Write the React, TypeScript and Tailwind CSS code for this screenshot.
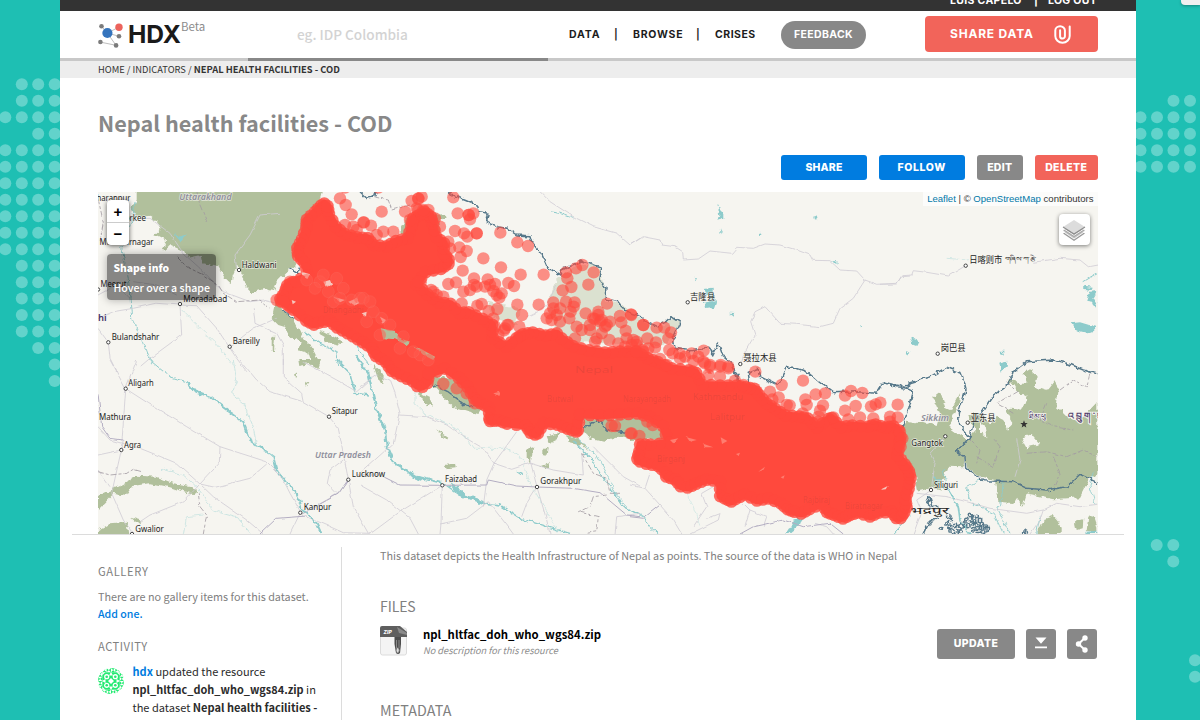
import React from 'react';

type Pt = [number, number];

/** Parses "x,y x,y" pairs drawn on a 3x grid whose corner sits at (ox, oy). */
const grid = (ox: number, oy: number, s: string): Pt[] =>
  s.trim().split(/\s+/).map((p) => {
    const [x, y] = p.split(',').map(Number);
    return [ox + x / 3, oy + y / 3];
  });
const line = (pts: Pt[]) => 'M' + pts.map((p) => `${p[0].toFixed(1)} ${p[1].toFixed(1)}`).join('L');
/** Moves every vertex of a closed counter-clockwise ring inwards by d. */
const inset = (ring: Pt[], d: number): Pt[] =>
  ring.map((p, i) => {
    const a = ring[(i + ring.length - 1) % ring.length];
    const b = ring[(i + 1) % ring.length];
    const dx = b[0] - a[0];
    const dy = b[1] - a[1];
    const len = Math.hypot(dx, dy) || 1;
    return [p[0] + (dy / len) * d, p[1] - (dx / len) * d];
  });
const A = (s: string) => grid(90, 185, s);
const B = (s: string) => grid(360, 185, s);
const C = (s: string) => grid(630, 185, s);
const D = (s: string) => grid(880, 185, s);
const E = (s: string) => grid(90, 360, s);
const F = (s: string) => grid(360, 360, s);
const G = (s: string) => grid(630, 360, s);
const H = (s: string) => grid(880, 360, s);

const forests: Pt[][] = [
  A('140,15 140,45 125,70 135,98 180,92 200,110 215,130 192,150 228,168 218,197 240,180 262,190 290,203 300,220 335,212 340,235 385,245 402,275 425,298 428,270 442,240 458,270 470,308 485,325 520,312 552,318 562,290 590,260 615,240 610,190 650,100 660,70 690,50 700,15'),
  A('556,350 585,380 610,400 625,430 640,460 665,485 685,525 665,535 655,505 625,495 632,470 600,455 582,425 565,420 545,400'),
  A('545,465 556,450 552,495 545,495'),
  A('690,435 760,470 750,480 705,470'),
  B('125,130 145,90 175,95 215,90 255,88 260,98 235,105 240,140 200,160 130,150'),
  B('60,430 110,440 150,470 185,490 235,515 245,540 180,540 100,470 70,465'),
  F('40,15 60,30 72,52 66,75 52,50'),
  F('150,0 240,50 300,62 345,100 385,128 372,140 355,162 320,152 280,140 255,118 230,90 200,60'),
  F('175,98 215,118 215,140 192,125'),
  F('668,172 840,174 840,240 770,230 730,245 690,235 668,205'),
  G('0,176 35,174 65,185 95,215 100,240 50,238 0,240'),
  F('560,232 600,216 592,240 568,252'),
  F('622,225 650,235 688,272 665,255 625,245'),
  F('500,268 520,262 512,310 500,290'),
  F('550,270 564,262 560,284 550,282'),
  F('540,320 570,308 562,322'),
  F('255,315 285,310 287,325 260,328'),
  F('228,208 262,230 258,236 240,222'),
  E('24,408 100,372 140,347 200,350 250,370 300,378 325,398 310,405 240,382 180,370 130,378 110,408 70,402 24,450'),
  E('24,510 60,490 110,485 115,525 24,525'),
  E('120,470 160,483 148,495'),
  E('625,0 690,0 682,25 660,12 628,18'),
  E('615,40 625,42 618,55'),
  E('645,65 658,70 650,80'),
  H('60,205 82,185 105,190 130,185 170,198 180,160 160,110 180,95 195,140 215,150 240,100 238,130 220,165 205,200 240,225 265,240 230,275 255,290 250,322 205,320 195,350 175,375 188,395 150,385 110,395 105,340 80,300 65,270'),
  H('270,232 290,210 272,190 262,165 300,160 335,195 350,170 370,180 380,210 400,190 378,150 395,143 425,152 440,110 412,92 385,55 420,72 440,70 430,40 455,25 470,50 462,80 500,92 525,60 535,95 530,140 560,170 600,180 652,125 652,345 628,355 600,412 520,418 440,400 428,440 410,415 400,432 370,430 352,418 345,360 300,350 262,325 255,290 230,275'),
  H('490,478 520,468 545,500 545,522 470,522'),
  H('585,485 610,478 608,505 590,510'),
  H('625,470 640,465 652,500 652,515 620,512'),
];

const paleForests: Pt[][] = [
  B('590,285 620,260 660,240 700,240 722,255 738,310 735,350 780,355 840,400 840,480 640,470 590,440 560,350'),
  C('0,390 60,420 100,425 110,405 135,400 148,412 130,455 100,480 0,480'),
  B('380,350 480,370 470,420 400,400'),
];

const clearings: Pt[][] = [
  H('300,190 318,205 322,235 300,215'),
  H('425,235 455,222 480,252 440,262'),
  H('530,140 545,95 600,70 640,90 648,128 600,178 560,160'),
  A('430,285 445,265 462,290 458,318 435,310'),
  A('185,112 210,128 195,146 178,135'),
];

const lakes: Pt[][] = [
  C('262,55 270,75 280,85 280,105 262,110 268,90'),
  C('272,130 278,140 275,148'),
  C('550,95 560,90 563,102 552,104'),
  C('390,140 398,145 395,153 388,152'),
  C('605,224 620,232 618,237'),
  C('220,312 248,308 248,322 258,350 252,368 225,372 222,355 245,345 225,325'),
  C('192,275 200,278 196,286'),
  C('300,383 316,384 312,392'),
  C('694,418 700,425 696,432'),
  C('824,496 838,500 834,506'),
  D('574,415 600,412 645,425 646,440 625,445 585,435'),
  D('90,460 118,468 112,480 98,475'),
  D('75,496 88,500 82,506'),
  D('612,305 635,308 632,315 614,312'),
  D('630,320 652,318 640,340 652,352 645,372 636,350 622,348'),
  D('358,500 374,500 368,512'),
  H('358,8 382,2 380,22 365,38'),
  G('492,482 525,470 508,495 478,522 466,522'),
  F('468,335 485,338 486,348'),
  F('268,370 290,378 320,405 380,425 378,432 310,412 285,395'),
  F('140,335 190,355 182,362 160,355'),
  A('250,145 268,155 290,148 272,172'),
  H('620,515 652,512 652,522 618,522'),
];

const rivers: [Pt[], number][] = [
  [E('185,5 240,50 290,65 315,95 360,110 420,155'), 1],
  [E('290,65 315,95 360,110 420,155 460,185 480,240 550,290 560,330 590,370 620,400 635,445 680,490 695,522'), 1.9],
  [E('430,0 440,60 425,100 460,130 490,200 500,260 550,290'), 0.7],
  [A('270,370 320,420 380,480 425,535'), 0.6],
  [A('135,50 128,100 95,190 115,280 120,340 125,400 160,470 185,535'), 0.9],
  [A('640,440 690,475 740,500 745,540'), 1.3],
  [A('800,480 815,510 840,540'), 1],
  [E('740,0 780,40 795,100 840,105'), 1.6],
  [F('-15,-15 25,40 50,150 75,210 80,260 100,305 170,350 250,370'), 2.2],
  [F('250,370 300,405 370,430 420,435 480,475 560,500 630,520'), 1.4],
  [F('165,85 165,130 200,165 300,210 340,265 440,265 490,300 510,370 540,420 580,490 600,518'), 0.6],
  [F('640,240 690,290 720,340 750,380 790,440 840,465'), 1.3],
  [F('655,240 710,285 740,340 765,395 800,440'), 0.8],
  [E('210,325 280,345 330,390 370,450 440,470 480,518'), 0.7],
  [E('280,522 290,470 340,465'), 0.6],
  [G('0,450 40,470 60,500 85,522'), 1],
  [G('170,400 190,440 210,500'), 0.5],
  [G('838,470 815,495 790,522'), 1],
  [H('160,350 205,390 235,440 240,480 270,520'), 1.6],
  [H('190,330 200,390'), 0.8],
  [H('370,360 362,440 350,440 380,500 390,520'), 0.9],
  [H('300,360 260,380 275,430 340,460 370,520'), 0.9],
  [H('640,335 630,380 645,430'), 0.8],
  [H('480,470 470,520'), 0.9],
  [D('200,220 262,225'), 0.6],
  [D('608,290 652,264'), 1],
  [B('570,80 600,85 640,100'), 1.1],
];

const roads: Pt[][] = [
  A('24,400 70,380 130,370 200,355 270,360 320,362 380,430 440,520 470,560'),
  A('270,360 275,450 180,520 150,545'),
  A('24,430 55,472 60,520 80,560'),
  A('150,100 180,100 240,145 280,205 330,250 400,320 480,350 520,345 560,355'),
  A('440,255 435,210 480,150 510,90 570,85'),
  A('130,290 200,300 260,330'),
  A('420,485 490,430 560,400'),
  A('490,370 495,415 560,445 580,480 580,540'),
  A('24,330 80,300 120,340'),
  E('60,0 107,86 140,0'),
  E('107,86 175,130 290,200 390,260 530,305 575,350 600,400 640,470'),
  E('107,86 97,230 94,270 65,400 100,480 130,522'),
  E('24,200 60,240 150,265 200,285 260,310 330,372 370,410 470,480 520,522'),
  E('24,285 94,270'),
  E('450,0 500,60 540,95 640,125 717,170 745,205 760,280 775,359 745,400 640,460'),
  E('580,0 580,50 635,100 640,125'),
  E('640,5 740,60 800,95 840,60'),
  E('390,260 388,310 330,372'),
  E('530,312 480,355 375,382 330,372'),
  E('330,372 280,425 180,465 150,485'),
  E('650,470 720,500 760,518 840,520'),
  E('775,359 790,440 835,520'),
  E('630,460 600,522'),
  E('24,330 60,380'),
  E('760,300 720,330 712,370 740,400'),
  F('0,80 50,45 90,60 105,100 120,160 100,250 0,340'),
  F('120,165 200,170 260,195 310,230 370,265 402,310 380,360 370,440'),
  F('247,376 243,490 240,522'),
  F('247,376 120,455 30,522'),
  F('0,375 80,420 150,475 175,522'),
  F('240,492 320,475 385,425'),
  F('385,425 440,495 460,522'),
  F('402,310 470,215'),
  F('402,310 455,328 510,310 580,330 670,345 665,280'),
  F('510,300 531,381 560,480 570,522'),
  F('531,381 500,430 485,470'),
  F('700,260 790,350 840,378'),
  F('840,460 770,470 765,522'),
  G('0,375 45,385 90,435 130,480 155,522'),
  G('45,385 60,340'),
  G('250,380 215,400 230,440 190,500'),
  G('230,475 270,460 265,480 180,522'),
  G('340,430 360,450 345,500'),
  G('360,450 410,470 400,500'),
  G('555,490 590,500 610,522'),
  B('540,20 570,50 640,95 700,125 770,145 810,180 840,160'),
  B('500,395 530,380 560,360 590,300'),
  C('0,180 40,155 90,165 95,180 135,185 158,200 160,225 205,222 240,198 305,205 320,187 370,190 405,177 450,180 500,195 540,210 548,226 600,227 630,255 680,258 705,285 740,298 800,295 815,275 840,273'),
  C('705,285 670,340 630,370 610,415 570,425 500,418 450,415 405,365 375,380 362,410 375,450 345,500 332,540'),
  D('0,298 50,297 65,272 95,270 100,257 140,262 205,273 257,242'),
  D('460,232 540,220 600,225 625,245 652,240'),
  H('153,391 110,420 125,455 100,522'),
  H('196,229 150,280 165,310 153,391'),
  H('110,400 200,410 260,425 330,445 440,460 490,450 530,430 600,440 652,433'),
  H('410,235 420,300 405,350'),
  H('490,450 480,480 450,522'),
];

const highways: Pt[][] = [
  E('650,468 560,475 510,522'),
  E('640,460 745,402 775,359'),
  E('24,100 35,200 60,235 100,240'),
  F('-10,345 60,345 120,375 247,376 380,375 385,360 470,378 531,381 640,385 720,398 800,465 840,470'),
  G('0,470 40,475 90,435'),
  G('330,522 370,500 460,480 520,500 600,490 640,522'),
];

const dashed: Pt[][] = [
  E('24,335 60,345 110,340 130,328 155,335'),
  E('325,400 330,440 350,465 340,522'),
  F('665,280 700,340 740,355 750,400 780,400'),
  F('740,405 700,410 690,440 655,455 715,470 710,515 680,520'),
  A('260,215 290,245 340,270 385,300 400,325 440,350 510,345 540,370'),
  A('320,21 330,60 350,110'),
  A('24,40 40,110 30,170'),
  B('40,35 85,45 95,75 150,60'),
  H('290,290 340,320 360,260 340,235'),
  H('440,280 500,275 560,290 610,270 650,290'),
  H('380,65 410,95 350,130 400,160'),
  H('540,90 580,60 620,80 630,40'),
  H('500,130 480,180 520,200 580,210'),
  H('520,290 540,340 520,385'),
  H('270,240 300,270 290,310'),
];

const borders: Pt[][] = [
  B('0,20 20,40 45,35 48,18'),
  B('250,15 300,40 350,60 358,80 385,85 380,110 410,125 440,130 470,150 510,152 515,170 545,210 560,245 600,270 605,255 640,240 665,228 700,240 725,250 720,280 738,310 735,342 775,350 795,378 845,395 860,410 890,425 920,410 935,395 960,412 940,455 945,490 990,497 1050,490 1058,510 1075,475 1090,515 1115,535 1120,560 1135,590'),
  G('310,20 330,70 360,75 355,40 385,28 390,50 440,75 460,50 470,25 500,25 530,35 560,60 610,98 680,95 740,100 760,68 800,80 838,75'),
  H('0,70 80,85 85,70 150,50 200,22 245,40 258,90 235,160 240,200 270,230 230,275 255,290 257,325 310,362 400,365 440,385 500,390 560,380 600,343 652,368'),
  H('80,85 100,95 85,150 65,205'),
  H('270,232 280,190 310,150 340,105 390,70 400,35 440,5 520,0 560,10 610,30 652,42'),
  H('130,520 145,490 175,475 165,450 140,430 150,410 158,435 185,455'),
  F('215,72 260,95 320,140 380,130'),
  F('668,200 690,200 710,175 740,210 800,220'),
  A('600,250 625,265 628,248'),
  A('575,370 610,400'),
];

const enclaves: Pt[] = H(
  '205,470 215,480 200,490 210,500 225,495 235,505 245,500 215,512 228,518 240,515 250,490 182,505 270,465 280,475 290,468 300,480 275,490 290,495 305,492 315,500 280,508 295,512 310,515 320,508 265,498 262,480 285,485 300,505 440,515 430,518'
);

const mass: Pt[] = [
  [325, 198], [318, 201], [311, 208], [302, 217], [301, 226], [297, 237], [292, 247], [293, 258], [300, 266], [304, 272], [291, 277], [283, 282],
  [280, 290], [275, 298], [277, 305], [284, 309], [290, 314], [303, 325], [313, 330], [320, 328], [328, 326], [334, 332], [345, 338], [350, 341], [360, 347],
  [368, 352], [372, 360], [382, 366], [388, 375], [399, 381], [410, 386], [415, 391], [424, 392], [432, 386], [433, 378], [444, 374], [455, 382], [463, 390],
  [470, 402], [478, 408], [484, 410], [484, 420], [488, 426], [498, 426], [506, 429], [524, 431], [527, 437], [535, 440], [542, 437], [546, 428], [556, 430], [566, 434], [577, 437],
  [583, 432], [583, 419], [600, 421], [620, 420], [637, 419], [648, 422], [659, 430], [665, 439], [650, 439], [637, 440], [634, 450],
  [632, 460], [637, 466], [645, 469], [656, 471], [661, 476], [663, 481], [672, 484], [678, 491], [688, 493], [698, 489], [708, 485], [715, 484], [715, 498],
  [722, 503], [731, 507], [738, 504], [744, 500], [756, 506], [768, 504], [778, 508], [785, 514], [793, 517], [802, 519], [812, 514], [821, 509], [823, 516], [832, 520], [843, 524],
  [852, 520], [857, 518], [870, 522], [880, 518], [890, 517], [894, 523], [903, 523], [909, 515], [912, 508], [911, 500], [914, 490], [916, 478], [914, 469],
  [909, 461], [903, 454], [905, 445], [906, 436], [903, 427], [895, 421], [886, 422], [876, 419], [868, 421], [852, 420], [843, 422], [834, 413], [826, 414], [817, 422],
  [811, 414], [800, 411], [787, 410], [778, 404], [770, 399], [763, 391], [757, 384], [747, 382], [737, 380], [720, 380], [705, 380], [700, 369],
  [690, 365], [673, 363], [660, 357], [650, 353], [637, 346], [620, 346], [605, 347], [590, 345], [575, 341], [565, 334], [558, 328], [546, 330],
  [533, 327], [521, 329], [513, 334], [505, 341], [498, 336], [497, 322], [485, 314], [470, 307], [462, 308], [453, 299], [440, 297], [431, 290], [422, 283], [428, 277], [443, 274],
  [453, 267], [454, 258], [449, 252], [449, 241], [441, 234], [438, 222], [435, 213], [425, 206], [417, 210], [409, 215], [406, 225], [404, 234], [394, 236],
  [385, 241], [376, 240], [370, 233], [358, 232], [347, 229], [340, 223], [334, 212], [332, 203],
];
const core = inset(mass, 5.5);
const rim: Pt[] = core.flatMap((p, i) => {
  const q = core[(i + 1) % core.length];
  return Math.hypot(q[0] - p[0], q[1] - p[1]) > 7 ? [p, [(p[0] + q[0]) / 2, (p[1] + q[1]) / 2] as Pt] : [p];
});

const facilities: Pt[] = [
  ...A('750,40 767,60 785,88 765,8 820,112 790,125 800,135 765,120 560,345 580,350 600,290 620,290'),
  ...B('55,8 65,80 12,112 33,122 70,140 100,140 50,150 135,80 185,35 155,48 175,42 175,40 170,70 175,75 205,75 190,75 280,37 293,85 326,90 326,90 340,85 330,103 285,138 312,145 350,145 350,145 322,155 421,143 472,172 504,183 298,187 320,198 302,216 370,220 423,247 308,257 482,269 551,269 667,240 648,250 701,262 618,262 622,280 634,306 608,316 685,299'),
  ...B('182,292 175,290 265,297 288,292 342,280 383,283 405,297 310,320 213,315 445,294 462,303 350,305 375,305 400,318 418,338 425,325 330,315 342,300 390,300 410,330 365,357 352,362 472,359 536,359 486,390 412,372 386,378 400,400 445,420 442,420 432,436 435,430 478,425 405,425 415,450 580,352 618,350 644,352 641,365 600,370 560,400 570,385 590,390 575,405 600,410 628,400 632,380 580,370 650,425 677,385 665,435 645,460'),
  ...B('700,400 705,402 715,380 715,390 720,410 725,405 735,425 740,420 690,420 750,410 741,356 690,435 710,460 748,465 705,470 725,445 780,393 814,390 784,412 797,437 800,460 795,485 775,475 820,465 850,420 830,480 270,190 265,170 240,125 225,100 150,105 230,330 250,335 305,355 220,320'),
  ...C('3,388 40,420 80,428 103,428 123,442 115,460 52,460 78,472 20,470 5,480 38,495 55,490 75,488 40,500 20,500 118,495 148,505 185,505 221,497 205,515 165,515 150,520 220,530 190,528 272,540 295,545 90,522 128,505 240,540 110,540'),
  ...G('295,25 270,20 240,20 225,10 235,45 270,50 315,62 340,75 376,35 455,75 519,62 420,95 446,112 427,118 479,136 470,135 526,118 530,135 557,103 585,100 579,136 570,152 566,170 518,160 645,107 663,93 697,99 645,152 677,138 723,139 751,128 737,133 803,134 780,170 803,172 610,172 690,172 730,175 655,178 565,185 780,185 810,215 817,235 812,260'),
  ...F('250,72 215,25 205,40 290,85 320,100 345,130 755,198 765,198 812,220'),
  ...G('5,220 28,228 68,195 52,185'),
];

const gapDots: Pt[] = [
  ...A('690,290 715,320 740,280 760,310 785,345 675,310 730,350 650,285 700,270 750,340 810,340'),
  ...B('65,400 20,410 40,380 10,340 30,350 90,420 130,455 180,510 120,490 205,525 160,500 60,450'),
];

const specks: Pt[][] = [
  A('640,262 660,268 652,282 636,272'),
  A('700,290 720,285 726,300 708,306'),
  A('730,335 765,345 750,352'),
  A('775,350 800,340 808,355 790,362'),
  A('605,345 618,350 608,358'),
  B('60,395 78,405 70,416'),
  B('5,385 20,380 18,395'),
  G('752,390 776,378 770,388'),
];
const faintSpecks: Pt[][] = [
  F('400,100 420,95 415,108'),
  G('120,240 145,235 130,250'),
  G('170,232 200,240 180,245'),
  G('215,250 250,262 225,262'),
  G('272,232 292,243 276,252'),
  G('318,282 330,278 326,288'),
  G('385,335 405,320 400,330'),
  G('452,352 464,346 460,356'),
  G('222,40 240,32 246,42'),
];

type Place = { t: string; x: number; y: number; w: number; dot?: Pt };
const places: Place[] = [
  { t: 'haranpur', x: 96.5, y: 201, w: 34 },
  { t: 'Roorkee', x: 115, y: 221, w: 31 },
  { t: 'Muzaffarnagar', x: 99.5, y: 245.3, w: 54 },
  { t: 'Haldwani', x: 241.7, y: 268, w: 35, dot: [239, 270] },
  { t: 'Meerut', x: 100.5, y: 287, w: 26, dot: [98, 289.5] },
  { t: 'Moradabad', x: 183.3, y: 301.5, w: 44, dot: [180, 304] },
  { t: 'Bulandshahr', x: 111.7, y: 339.5, w: 47.7, dot: [108.3, 342.3] },
  { t: 'Bareilly', x: 232.7, y: 344, w: 27, dot: [229.7, 346.7] },
  { t: 'Aligarh', x: 128.3, y: 386, w: 25.5, dot: [125.7, 388.7] },
  { t: 'Mathura', x: 99, y: 419.7, w: 32 },
  { t: 'Agra', x: 124, y: 447.7, w: 17, dot: [121.3, 450] },
  { t: 'Gwalior', x: 135.3, y: 532, w: 28.5, dot: [132, 534] },
  { t: 'Kanpur', x: 303.7, y: 509.7, w: 27.7, dot: [300.3, 512.7] },
  { t: 'Sitapur', x: 331.7, y: 413.7, w: 26, dot: [329, 416.7] },
  { t: 'Lucknow', x: 351.7, y: 477, w: 33.5, dot: [348.3, 479.7] },
  { t: 'Faizabad', x: 445, y: 482, w: 32, dot: [442.3, 485.3] },
  { t: 'Gorakhpur', x: 540.3, y: 484, w: 41, dot: [537, 487] },
  { t: '吉隆县', x: 690, y: 300, w: 25, dot: [687.7, 302.3] },
  { t: '聂拉木县', x: 743.3, y: 361, w: 33.3, dot: [740.3, 364] },
  { t: '日喀则市', x: 969.3, y: 263, w: 33, dot: [965.7, 265.7] },
  { t: '岗巴县', x: 940.7, y: 351, w: 25, dot: [937.7, 353.7] },
  { t: '亚东县', x: 970.7, y: 420.5, w: 24.7, dot: [967.7, 422.7] },
  { t: 'Gangtok', x: 911.3, y: 446, w: 31.7, dot: [945.3, 436.3] },
  { t: 'Siliguri', x: 934, y: 487.5, w: 24, dot: [931, 490] },
  { t: 'भद्रपुर', x: 910, y: 514, w: 39 },
];
const regions: Place[] = [
  { t: 'Uttarakhand', x: 179.3, y: 199.5, w: 52.3 },
  { t: 'Uttar Pradesh', x: 315, y: 457.5, w: 56 },
  { t: 'Sikkim', x: 921, y: 421, w: 28 },
];
const buried: Place[] = [
  { t: 'Dhangadhi', x: 322.7, y: 313, w: 41 },
  { t: 'Nepal', x: 575, y: 373, w: 38 },
  { t: 'Kathmandu', x: 693, y: 400, w: 50 },
  { t: 'Lalitpur', x: 710, y: 420, w: 35 },
  { t: 'Narayangadh', x: 623, y: 402, w: 48 },
  { t: 'Butwal', x: 547, y: 401.5, w: 26 },
  { t: 'Birganj', x: 657, y: 461.5, w: 28 },
  { t: 'Rajbiraj', x: 803, y: 503, w: 27 },
  { t: 'Biratnagar', x: 845, y: 509, w: 38 },
];

const mapFont = "font-['Noto_Sans','Noto_Sans_CJK_SC',sans-serif]";

function MapCanvas() {
  return (
    <svg viewBox="98 192 1000 342" className="block h-[342px] w-[1000px]" aria-hidden="true">
      <defs>
        <filter id="rough" x="98" y="180" width="1010" height="370" filterUnits="userSpaceOnUse">
          <feTurbulence type="fractalNoise" baseFrequency="0.17" numOctaves="2" seed="4" />
          <feDisplacementMap in="SourceGraphic" scale="6" xChannelSelector="R" yChannelSelector="G" />
        </filter>
        <filter id="gentle" x="98" y="180" width="1010" height="370" filterUnits="userSpaceOnUse">
          <feTurbulence type="fractalNoise" baseFrequency="0.1" numOctaves="2" seed="9" />
          <feDisplacementMap in="SourceGraphic" scale="3" xChannelSelector="R" yChannelSelector="G" />
        </filter>
      </defs>
      <rect x="98" y="192" width="1000" height="342" fill="#f6f5f0" />
      <g filter="url(#rough)">
        {paleForests.map((p, i) => <path key={i} d={line(p) + 'Z'} fill="#dbe1d0" />)}
        {forests.map((p, i) => <path key={i} d={line(p) + 'Z'} fill="#b1c09c" />)}
        {clearings.map((p, i) => <path key={i} d={line(p) + 'Z'} fill="#f6f5f0" />)}
        {lakes.map((p, i) => <path key={i} d={line(p) + 'Z'} fill="#8dcbcb" />)}
        {rivers.map(([p, w], i) => (
          <path key={i} d={line(p)} fill="none" stroke={w < 0.75 ? '#b9dedc' : '#8dcbcb'} strokeWidth={w} />
        ))}
      </g>
      <g filter="url(#gentle)" fill="none">
        {roads.map((p, i) => <path key={i} d={line(p)} stroke="#cfccd4" strokeWidth="0.8" />)}
        {highways.map((p, i) => <path key={i} d={line(p)} stroke="#b3adc2" strokeWidth="1" />)}
        {dashed.map((p, i) => <path key={i} d={line(p)} stroke="#a29ba2" strokeWidth="0.8" strokeDasharray="6 2 3 2" />)}
      </g>
      <g filter="url(#rough)" fill="none" stroke="#56788a" strokeLinejoin="round">
        {borders.map((p, i) => <path key={i} d={line(p)} strokeWidth="1.5" />)}
        {enclaves.map((p, i) => <circle key={i} cx={p[0]} cy={p[1]} r="1.8" strokeWidth="1.4" />)}
      </g>
      {places.map((p) => (
        <g key={p.t}>
          {p.dot && <circle cx={p.dot[0]} cy={p.dot[1]} r="1.7" fill="#fff" stroke="#333" strokeWidth="0.9" />}
          <text x={p.x} y={p.y} textLength={p.w} lengthAdjust="spacingAndGlyphs" fontSize="8.9" fill="#222" stroke="#f6f5f0" strokeOpacity="0.7" strokeWidth="1.6" paintOrder="stroke" className={mapFont}>{p.t}</text>
        </g>
      ))}
      {regions.map((p) => (
        <text key={p.t} x={p.x} y={p.y} textLength={p.w} lengthAdjust="spacingAndGlyphs" fontSize="8.9" fontStyle="italic" fontWeight="600" fill="#8f8f9c" stroke="#f6f5f0" strokeOpacity="0.7" strokeWidth="1.4" paintOrder="stroke" className={mapFont}>{p.t}</text>
      ))}
      <text x="98" y="320.7" textLength="8.7" lengthAdjust="spacingAndGlyphs" fontSize="9.5" fontWeight="600" fill="#45366b" className={mapFont}>hi</text>
      <text x="1005" y="261" textLength="30" lengthAdjust="spacingAndGlyphs" fontSize="6" fill="#333" className={mapFont}>གཞིས་ཀ་རྩེ</text>
      <text x="1029" y="419" textLength="17" lengthAdjust="spacingAndGlyphs" fontSize="7.5" fill="#3f3360" stroke="#f6f5f0" strokeWidth="1.4" paintOrder="stroke" className={mapFont}>ཐིམ་ཕུ</text>
      <text x="1068" y="418.5" textLength="44" lengthAdjust="spacing" fontSize="9" fontWeight="600" fill="#55456f" stroke="#f6f5f0" strokeWidth="2" paintOrder="stroke" className={mapFont}>འབྲུག་ཡུལ</text>
      <path d="M1024 420.3l1 2.6 2.7.1-2.1 1.7.7 2.7-2.3-1.500-2.3 1.500.7-2.700-2.1-1.700 2.700-.1z" fill="#333" />
      <path d={line(core) + 'Z'} fill="#ff493d" strokeLinejoin="round" stroke="#ff493d" strokeWidth="7.500" />
      {rim.map((p, i) => <circle key={i} cx={p[0]} cy={p[1]} r="6.300" fill="#ff493d" fillOpacity="0.8" />)}
      <g filter="url(#gentle)">
        <path d={line(B('62,430 105,438 125,462 150,470 140,480 105,463 70,460')) + 'Z'} fill="#b1c09c" />
        <path d={line(B('160,480 182,492 225,515 220,525 190,510')) + 'Z'} fill="#c9ac8a" />
        {specks.map((p, i) => <path key={i} d={line(p) + 'Z'} fill="#f7c6bd" />)}
        {faintSpecks.map((p, i) => <path key={i} d={line(p) + 'Z'} fill="#ff7d70" />)}
      </g>
      {facilities.map((p, i) => <circle key={i} cx={p[0]} cy={p[1]} r="6.200" fill="#ff493d" fillOpacity="0.6" />)}
      {gapDots.map((p, i) => <circle key={i} cx={p[0]} cy={p[1]} r="6" fill="#ff5a4d" fillOpacity="0.5" stroke="#f4867c" strokeOpacity="0.3" strokeWidth="0.6" />)}
      {buried.map((p) => (
        <text key={p.t} x={p.x} y={p.y} textLength={p.w} lengthAdjust="spacingAndGlyphs" fontSize="9" fill="#5c2a2a" fillOpacity="0.13" className={mapFont}>{p.t}</text>
      ))}
    </svg>
  );
}

const leftDots: [number, number[]][] = [
  [84.3, [21.8, 38.2, 54.7]],
  [100.8, [21.8, 38.2, 54.7]],
  [117.3, [5.3, 21.8, 38.2, 54.7]],
  [133.8, [38.2, 54.7]],
  [150.3, [5.3, 21.8, 38.2, 54.7]],
  [166.8, [5.3, 21.8, 38.2, 54.7]],
  [183.3, [5.3, 21.8, 38.2, 54.7]],
  [199.8, [5.3, 21.8, 38.2, 54.7]],
  [216.3, [5.3, 21.8, 38.2, 54.7]],
  [232.8, [5.3, 21.8, 38.2, 54.7]],
  [249.3, [5.3, 21.8, 38.2, 54.7]],
  [265.8, [21.8, 38.2, 54.7]],
  [282.3, [21.8, 38.2, 54.7]],
  [298.5, [21.8, 38.2, 54.7]],
  [315, [21.8, 38.2, 54.7]],
  [331.5, [21.8, 38.2, 54.7]],
  [348, [38.2, 54.7]],
  [364.5, [54.7]],
  [381, [54.7]],
];
const rightDots: [number, number[]][] = [
  [100.8, [37.5, 54]],
  [117.3, [4.5, 21, 37.5, 54]],
  [133.8, [4.5, 21, 37.5, 54]],
  [150.3, [4.5, 21, 37.5, 54]],
  [166.8, [4.5, 21, 37.5, 54]],
  [545, [20.7, 37.3]],
  [561.6, [37.3]],
  [660.3, [59]],
  [676.8, [59]],
];

function Dots({ rows, className }: { rows: [number, number[]][]; className: string }) {
  return (
    <svg className={className} aria-hidden="true">
      {rows.map(([y, xs]) => xs.map((x) => <circle key={`${x}-${y}`} cx={x} cy={y} r="6" fill="#62d3cb" />))}
    </svg>
  );
}

function Logo() {
  return (
    <svg viewBox="98 21 26 26" className="h-[26px] w-[26px]" aria-hidden="true">
      <path d="M101.5 25.2l5.8 6.8 11.6-5.8M107.3 32l11.7 3.3M107.3 32l8.7 12.3-15.7-3.2" fill="none" stroke="#b5b5b5" strokeWidth="0.9" />
      <circle cx="101.5" cy="25.2" r="2.3" fill="#7b7b7b" />
      <circle cx="119" cy="35.3" r="2.3" fill="#7b7b7b" />
      <circle cx="100.4" cy="41" r="2.3" fill="#7b7b7b" />
      <circle cx="116.1" cy="44.4" r="2.3" fill="#7b7b7b" />
      <circle cx="119" cy="26.3" r="3.7" fill="#ec635c" />
      <circle cx="107.4" cy="32" r="5.1" fill="#3574bd" />
    </svg>
  );
}

function ZipIcon() {
  return (
    <svg viewBox="0 0 27 30" className="h-[30px] w-[27px] shrink-0" aria-hidden="true">
      <rect x="0.5" y="2" width="26" height="27" rx="2" fill="#f4f4f4" stroke="#dcdcdc" />
      <path d="M2 0h18l7 6v5H0V2q0-2 2-2z" fill="#5f5f5f" />
      <path d="M17 1l10 6v2l-8-2z" fill="#8a8a8a" />
      <path d="M14.5 11h6.5v7l-1 9q-2 2-4 0l-1.500-9z" fill="#4c4c4c" />
      <path d="M16.500 14v8M19 14v8" stroke="#9c9c9c" strokeWidth="0.8" />
      <ellipse cx="17.700" cy="24.300" rx="1.500" ry="2.600" fill="#dedede" stroke="#777" strokeWidth="0.8" />
      <text x="3.600" y="8" fontSize="5" fontWeight="800" fontStyle="italic" fill="#fff" className="font-['Inter',sans-serif]">ZIP</text>
    </svg>
  );
}

function Identicon() {
  const tiles = [
    [1, 0], [2, 0], [3, 0], [4, 0], [0, 1], [5, 1], [0, 2], [5, 2], [0, 3], [5, 3], [0, 4], [5, 4], [1, 5], [2, 5], [3, 5], [4, 5],
  ];
  return (
    <svg viewBox="0 0 26 26" className="mt-[6px] h-[26px] w-[26px] shrink-0" aria-hidden="true">
      <defs>
        <clipPath id="round"><circle cx="13" cy="13" r="13" /></clipPath>
      </defs>
      <g clipPath="url(#round)" fill="#24ea72">
        {tiles.map(([x, y], i) => (
          <path key={i} transform={`translate(${x * 4.33} ${y * 4.33})`} d={(x + y) % 2 ? 'M0 0h4.300L0 4.300h4.300z' : 'M0 0v4.300L4.300 0v4.300z'} />
        ))}
        <rect x="4.300" y="4.300" width="17.400" height="17.400" />
        {[[8.7, 8.700], [17.300, 8.700], [8.700, 17.300], [17.300, 17.300]].map(([x, y], i) => (
          <g key={i}>
            <circle cx={x} cy={y} r="2.600" fill="#fff" />
            <circle cx={x} cy={y} r="1.300" />
          </g>
        ))}
        <path d="M13 10l3 3-3 3-3-3zM13 4l2 3.500h-4zM13 22l2-3.500h-4zM4 13l3.500-2v4zM22 13l-3.500-2v4zM4.300 4.300h3l-3 3zM21.700 4.300h-3l3 3zM4.300 21.700h3l-3-3zM21.700 21.700h-3l3-3z" fill="#fff" />
      </g>
    </svg>
  );
}

const action = 'flex h-[25px] items-center justify-center rounded-[3px] text-[10.5px] font-extrabold text-white';

export default function App() {
  return (
    <div className="flex h-[720px] w-[1200px] overflow-hidden bg-white font-['Noto_Sans_CJK_SC',sans-serif] text-[10.8px] text-[#808080]">
      <aside className="w-[60px] shrink-0 bg-[#1ebfb3]">
        <Dots rows={leftDots} className="h-[720px] w-[60px]" />
      </aside>

      <div className="flex w-[1076px] shrink-0 flex-col">
        <div className="flex h-[11px] shrink-0 items-end justify-end overflow-hidden bg-[#333] pr-[38px] font-['Inter',sans-serif] text-[10.5px] leading-[20px] font-bold text-white">
          <div className="flex w-[148px] whitespace-nowrap">
            <span className="w-[84px] tracking-[0.33px]">LUIS CAPELO</span>
            <span className="w-[14px]">|</span>
            <span className="tracking-[0.3px]">LOG OUT</span>
          </div>
        </div>

        <header className="flex h-[47px] shrink-0 items-center pl-[38px] font-['Inter',sans-serif] text-[10.5px] font-bold text-[#1d1d1d]">
          <div className="flex w-[199px] items-center">
            <Logo />
            <span className="mb-px ml-[4px] text-[24.6px] leading-[26px] font-bold tracking-[0px] text-[#1a1a1a]">HDX</span>
            <span className="mb-[17px] font-['Noto_Sans_CJK_SC',sans-serif] text-[11.5px] leading-[14px] font-normal text-[#8c8c8c]">Beta</span>
          </div>
          <span className="mb-[2px] w-[272px] font-['Noto_Sans_CJK_SC',sans-serif] text-[13.6px] leading-[20px] font-medium text-[#d3d3d3]">eg. IDP Colombia</span>
          <nav className="flex w-[212px] items-center leading-[14px]">
            <span className="w-[45px] tracking-[0.9px]">DATA</span>
            <span className="w-[19px] font-semibold">|</span>
            <span className="w-[63px] tracking-[0.75px]">BROWSE</span>
            <span className="w-[19px] font-semibold">|</span>
            <span className="tracking-[0.5px]">CRISES</span>
          </nav>
          <button className="flex h-[28px] w-[85px] items-center justify-center rounded-full bg-[#888] tracking-[0.36px] text-white">FEEDBACK</button>
          <button className="mb-px ml-[59px] flex h-[36px] w-[172.5px] items-center rounded-[4px] bg-[#f2645a] pl-[25px] text-[12px] tracking-[0.8px] text-white">
            <span className="mb-px w-[104px] text-left leading-[16px] whitespace-nowrap">SHARE DATA</span>
            <svg viewBox="0 0 17 19" className="h-[19px] w-[17px]" fill="none" stroke="#fff" strokeWidth="2" strokeLinecap="round" strokeLinejoin="round" aria-hidden="true">
              <path d="M15.700 1.500v9.500a7.200 6.800 0 0 1-14.400 0V5.500a4.800 4.300 0 0 1 9.600 0v5.700a2.400 2.400 0 0 1-4.800 0V5.200" />
            </svg>
          </button>
        </header>
        <div className="flex h-[3px] shrink-0 bg-[#c8c8c8] pl-[188px]">
          <div className="h-[3px] w-[299.5px] bg-[#888]" />
        </div>
        <div className="h-[17px] shrink-0 bg-[#ededed] pl-[38px] text-[9.33px] leading-[17px] whitespace-nowrap text-[#333]">
          HOME / INDICATORS / <b className="font-bold">NEPAL HEALTH FACILITIES - COD</b>
        </div>

        <h1 className="mt-[30px] h-[30px] shrink-0 pl-[38px] text-[21.63px] leading-[30px] font-bold text-[#888]">Nepal health facilities - COD</h1>

        <div className="mt-[17px] flex shrink-0 justify-end pr-[38.5px] font-['Inter',sans-serif]">
          <button className={`${action} w-[86px] bg-[#007ce0] tracking-[0.2px]`}>SHARE</button>
          <button className={`${action} ml-3 w-[85.500px] bg-[#007ce0] tracking-[0.6px]`}>FOLLOW</button>
          <button className={`${action} ml-[12.500px] w-[45.500px] bg-[#888] tracking-[0.25px]`}>EDIT</button>
          <button className={`${action} ml-[12.500px] w-[62.500px] bg-[#f2645a] tracking-[0.4px]`}>DELETE</button>
        </div>

        <section className="relative mt-[12px] ml-[38px] h-[342px] w-[999.500px] shrink-0 overflow-hidden">
          <MapCanvas />
          <div className="absolute top-[8px] left-[9px] flex w-[22px] flex-col overflow-hidden rounded-[4px] bg-white text-center font-['Liberation_Sans',sans-serif] text-[15px] font-bold text-black shadow-[0_1px_5px_rgba(0,0,0,0.65)]">
            <span className="h-[23px] border-b border-[#ccc] leading-[23px]">+</span>
            <span className="h-[22px] leading-[21px]">−</span>
          </div>
          <div className="absolute top-[62px] left-[9px] h-[46px] w-[109px] rounded-[4px] bg-black/45 pl-[6.500px] text-white shadow-[0_0_9px_rgba(0,0,0,0.3)]">
            <h4 className="mt-[4px] text-[10.300px] leading-[20px] font-black">Shape info</h4>
            <p className="text-[10.600px] leading-[20.500px] font-medium whitespace-nowrap">Hover over a shape</p>
          </div>
          <div className="absolute top-0 right-0 h-[14px] bg-white/70 pr-[4px] pl-[4px] font-['Liberation_Sans',sans-serif] text-[9.570px] leading-[14px] whitespace-nowrap text-[#333]">
            <span className="text-[#0078a8]">Leaflet</span> | © <span className="text-[#0078a8]">OpenStreetMap</span> contributors
          </div>
          <div className="absolute top-[22px] right-[8px] flex h-[31px] w-[31px] items-center justify-center rounded-[4px] bg-white shadow-[0_1px_4px_rgba(0,0,0,0.5)]">
            <svg viewBox="0 0 24 24" className="h-6 w-6" aria-hidden="true">
              <path d="M12 9l11 6.500-11 7.500-11-7.500z" fill="#9a9a9a" />
              <path d="M1 13.500l11 7.500 11-7.500" fill="#c4c4c4" stroke="#fff" strokeWidth="0.900" />
              <path d="M12 5.500l11 6.800-11 7-11-7z" fill="#a8a8a8" />
              <path d="M1 10.300l11 7 11-7" fill="none" stroke="#fff" strokeWidth="0.900" />
              <path d="M12 2l11 7-11 7-11-7z" fill="#dcdcdc" />
              <path d="M1 9l11 7 11-7" fill="none" stroke="#8d8d8d" strokeWidth="1.100" />
            </svg>
          </div>
        </section>

        <div className="mx-3 h-px shrink-0 bg-[#dcdcdc]" />

        <div className="flex min-h-0 flex-1 pl-[38px]">
          <aside className="mt-3 w-[244px] shrink-0 border-r border-[#dcdcdc]">
            <h2 className="mt-[16px] text-[11.2px] leading-[16px] tracking-[0.600px]">GALLERY</h2>
            <p className="mt-[9px] leading-[17px] whitespace-nowrap">There are no gallery items for this dataset.</p>
            <p className="text-[10.6px] leading-[17px] font-medium text-[#007ce0]">Add one.</p>
            <h2 className="mt-[16px] text-[11.2px] leading-[16px] tracking-[0.500px]">ACTIVITY</h2>
            <div className="mt-[8px] flex gap-[8.500px] text-[11.050px] leading-[18px] whitespace-nowrap text-[#2b2b2b]">
              <Identicon />
              <p>
                <b className="font-bold text-[#007ce0]">hdx</b> updated the resource<br />
                <b className="text-[10.930px] font-bold">npl_hltfac_doh_who_wgs84.zip</b> in<br />
                the dataset <b className="font-bold">Nepal health facilities -</b>
              </p>
            </div>
          </aside>

          <main className="w-[755px] shrink-0 pl-[38px]">
            <p className="mt-[12px] leading-[17px] whitespace-nowrap">This dataset depicts the Health Infrastructure of Nepal as points. The source of the data is WHO in Nepal</p>
            <h2 className="mt-[31px] text-[14px] leading-[22px] tracking-[-0.100px]">FILES</h2>
            <div className="mt-[9px] flex h-[35px] items-start">
              <ZipIcon />
              <div className="mt-[-1px] ml-[16px] flex-1">
                <h3 className="text-[11.360px] leading-[18px] font-bold text-black">npl_hltfac_doh_who_wgs84.zip</h3>
                <p className="text-[9.260px] leading-[15px] text-[#8c8c8c] italic">No description for this resource</p>
              </div>
              <div className="mt-[3px] flex gap-[11px] font-['Inter',sans-serif]">
                <button className="flex h-[30px] w-[78px] items-center justify-center rounded-[3px] bg-[#888] text-[10.500px] font-extrabold tracking-[0.380px] text-white">UPDATE</button>
                <button className="flex h-[30px] w-[30px] items-center justify-center rounded-[3px] bg-[#888]">
                  <svg viewBox="0 0 12 12" className="mb-[2px] h-3 w-3" fill="#fff" aria-hidden="true">
                    <path d="M0.500 0.500h11L6 6.800zM0 9.500h12v1.800H0z" />
                  </svg>
                </button>
                <button className="flex h-[30px] w-[30px] items-center justify-center rounded-[3px] bg-[#888]">
                  <svg viewBox="0 0 14 18" className="mb-px h-[18px] w-[14px]" fill="#fff" aria-hidden="true">
                    <path d="M10 2.800L3.500 9l6.500 6" fill="none" stroke="#fff" strokeWidth="2" />
                    <circle cx="10" cy="3" r="2.700" />
                    <circle cx="3.500" cy="9" r="2.700" />
                    <circle cx="10" cy="15" r="2.700" />
                  </svg>
                </button>
              </div>
            </div>
            <h2 className="mt-[38px] text-[14.300px] leading-[22px] tracking-[0.100px]">METADATA</h2>
          </main>
        </div>
      </div>

      <aside className="relative w-[64px] shrink-0 bg-[#1ebfb3]">
        <Dots rows={rightDots} className="h-[720px] w-[64px]" />
        <div className="absolute top-0 right-0 h-[5px] w-[19px] rounded-bl-[4px] bg-[#f0f0f0] shadow-[0_1px_3px_rgba(0,0,0,0.3)]" />
      </aside>
    </div>
  );
}
